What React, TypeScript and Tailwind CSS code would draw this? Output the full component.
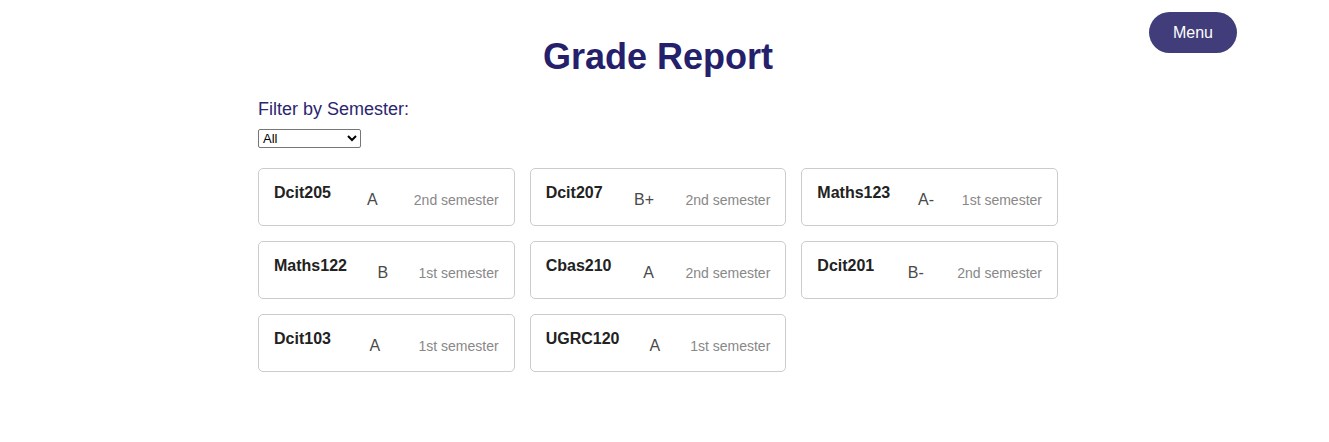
import React from "react";

const courses = [
  { code: "Dcit205", grade: "A", sem: "2nd semester" },
  { code: "Dcit207", grade: "B+", sem: "2nd semester" },
  { code: "Maths123", grade: "A-", sem: "1st semester" },
  { code: "Maths122", grade: "B", sem: "1st semester" },
  { code: "Cbas210", grade: "A", sem: "2nd semester" },
  { code: "Dcit201", grade: "B-", sem: "2nd semester" },
  { code: "Dcit103", grade: "A", sem: "1st semester" },
  { code: "UGRC120", grade: "A", sem: "1st semester" },
];

export default function App() {
  return (
    <div className="relative min-h-[442px] w-full bg-white font-['Liberation_Sans',Arial,sans-serif]">
      <button className="absolute top-[12px] left-[1149px] h-[41px] w-[88px] rounded-full bg-[#403d7a] text-[16px] text-white">
        Menu
      </button>
      <div className="w-[1316px]">
        <div className="mx-auto w-[800px] pt-[36px]">
          <h1 className="text-center text-[36px] leading-[41px] font-bold text-[#25206b]">
            Grade Report
          </h1>
          <div className="mt-[22px] text-[18px] leading-[21px] text-[#2b2670]">
            Filter by Semester:
          </div>
          <select className="mt-[9px] block h-[19px] w-[103px] rounded-[2px] border border-[#767676] bg-white text-[13px] leading-[15px] text-black">
            <option>All</option>
            <option>1st semester</option>
            <option>2nd semester</option>
          </select>
          <div className="mt-[20px] grid grid-cols-3 gap-x-[15px] gap-y-[15px]">
            {courses.map((c) => (
              <div
                key={c.code}
                className="flex h-[58px] items-start justify-between rounded-[5px] border border-[#cccccc] px-[15px] pt-[15px]"
              >
                <div className="text-[16px] leading-[18px] font-bold text-[#222222]">{c.code}</div>
                <div className="mt-[7px] text-[16px] leading-[18px] text-[#4a4a4a]">{c.grade}</div>
                <div className="mt-[8px] text-[14px] leading-[16px] text-[#888888]">{c.sem}</div>
              </div>
            ))}
          </div>
        </div>
      </div>
    </div>
  );
}
